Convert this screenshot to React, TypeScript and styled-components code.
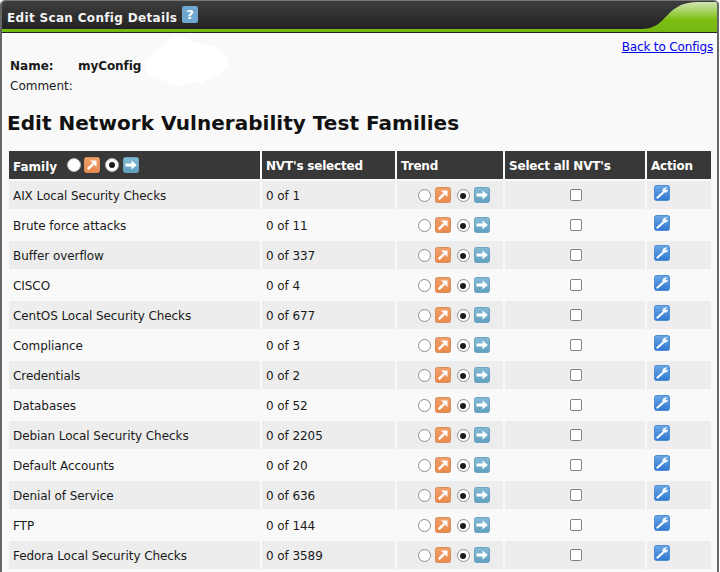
import React from "react";
import styled, { createGlobalStyle } from "styled-components";

const Global = createGlobalStyle`
  html, body { margin: 0; padding: 0; background: #fff; overflow: hidden; height: 572px; }
  body { font-family: "DejaVu Sans", Verdana, sans-serif; font-size: 12px; color: #1a1a1a; letter-spacing: -0.07px; }
`;
const Win = styled.div`
  width: 719px; height: 600px; box-sizing: border-box;
  border-left: 2px solid #666; border-right: 2px solid #666;
  border-top: 1px solid #777; border-radius: 5px 5px 0 0; background: #f9f9f9; overflow: hidden;
`;
const Head = styled.div`
  position: relative; height: 32px; box-sizing: border-box;
  background: linear-gradient(#3e3e3e, #232323 90%);
  border-bottom: 1px solid #222; box-shadow: inset 0 -3px 0 #76b812;
  display: flex; align-items: flex-start; padding: 5px 0 0 5px; gap: 5px; overflow: hidden;
`;
const HeadTitle = styled.span` color: #f4f4f4; font-weight: bold; font-size: 12px; line-height: 24px; letter-spacing: 0.33px; `;
const Swoosh = styled.svg` position: absolute; right: 0; top: 0; `;
const Body = styled.div` position: relative; padding: 0 4px 0 6px; `;
const BackRow = styled.div` display: flex; justify-content: flex-end; height: 23px; padding-top: 6px; box-sizing: border-box; `;
const BackLink = styled.a` color: #0000ee; text-decoration: underline; font-size: 12px; line-height: 17px; letter-spacing: -0.15px; `;
const Blob = styled.svg` position: absolute; left: 138px; top: 0; `;
const InfoRow = styled.div` display: flex; line-height: 20px; padding-left: 2px; `;
const InfoLabel = styled.span<{ $bold?: boolean }>` width: 68px; font-weight: ${p => (p.$bold ? "bold" : "normal")}; letter-spacing: 0; `;
const InfoValue = styled.span` font-weight: bold; `;
const H1 = styled.h1` font-size: 20px; line-height: 24px; font-weight: bold; color: #111; margin: 15px 0 16px -1px; letter-spacing: 0.03px; `;
const Table = styled.table` border-collapse: separate; border-spacing: 2px; table-layout: fixed; width: 704px; margin: -2px 0 0 -1px; `;
const Th = styled.th<{ $w: number }>`
  width: ${p => p.$w}px; height: 28px; box-sizing: border-box; padding: 2px 4px 0; background: #383838; color: #fff;
  text-align: left; font-size: 12px; font-weight: bold; white-space: nowrap; vertical-align: middle; letter-spacing: -0.2px;
`;
const FamilyHead = styled.div` display: flex; align-items: center; margin-top: -2px; `;
const FamilyLabel = styled.span` margin-top: 4px; margin-right: 10px; letter-spacing: 0; `;
const Row = styled.tr<{ $odd: boolean }>` background: ${p => (p.$odd ? "#ededed" : "#f9f9f9")}; `;
const Td = styled.td`
  height: 28px; box-sizing: border-box; padding: 0 4px; white-space: nowrap; font-size: 12px; vertical-align: middle;
`;
const TextCell = styled(Td)` padding-top: 2px; `;
const CheckCell = styled(Td)` text-align: center; padding-left: 5px; `;
const TrendBox = styled.div` display: flex; justify-content: center; align-items: center; height: 18px; padding-left: 7px; `;
const HeadTrend = styled.div` display: flex; align-items: center; height: 18px; `;
const Radio = styled.span<{ $on?: boolean }>`
  width: 13px; height: 13px; box-sizing: border-box; border-radius: 50%; border: 1.5px solid #8d8d88;
  background: #fff; margin-top: 1px; flex: none; display: flex; align-items: center; justify-content: center;
  &::after { content: ""; display: ${p => (p.$on ? "block" : "none")}; width: 6px; height: 6px; border-radius: 50%; background: #1c1c1c; }
`;
const HeadRadio = styled(Radio)` width: 14px; height: 14px; margin-top: 0; border-color: #b5b5b0; `;
const Gap = styled.span<{ $w: number }>` width: ${p => p.$w}px; flex: none; `;
const Check = styled.span`
  display: inline-block; width: 12px; height: 12px; box-sizing: border-box; border: 1.5px solid #85857f;
  border-radius: 2px; background: #fff; vertical-align: middle; margin-top: -1px;
`;
const ActionBox = styled.div` display: flex; margin: -4px 0 0 3px; `;
const IconSvg = styled.svg` flex: none; display: block; `;

const Icon16: React.FC<{ id: string; c1: string; c2: string; edge: string; children: React.ReactNode }> = ({ id, c1, c2, edge, children }) => (
  <IconSvg width="16" height="16" viewBox="0 0 16 16">
    <defs>
      <linearGradient id={id} x1="0" y1="0" x2="0" y2="1">
        <stop offset="0" stopColor={c1} />
        <stop offset="1" stopColor={c2} />
      </linearGradient>
    </defs>
    <rect x="0.5" y="0.5" width="15" height="15" rx="2" fill={`url(#${id})`} stroke={edge} />
    {children}
  </IconSvg>
);
const UpIcon = () => (
  <Icon16 id="gUp" c1="#f0a06a" c2="#e98a4c" edge="#d98b58">
    <path d="M3.8 12.2L9.2 6.8" fill="none" stroke="#fff" strokeWidth="2.6" />
    <path d="M6 3.5H12.5V10Z" fill="#fff" />
  </Icon16>
);
const SameIcon = () => (
  <Icon16 id="gSame" c1="#86bbd6" c2="#5f9fc0" edge="#6ea3bf">
    <path d="M2.5 8H9.5" stroke="#fff" strokeWidth="3" />
    <path d="M8.5 3.5L13.8 8L8.5 12.5Z" fill="#fff" />
  </Icon16>
);
const EditIcon = () => (
  <Icon16 id="gEdit" c1="#6aa8e6" c2="#3079d0" edge="#4d8dd6">
    <path d="M2.8 13.2L9.5 7.2" stroke="#fff" strokeWidth="2" />
    <path d="M13.6 2.6L11.4 4.6L11.9 5.6L14 4.4C14.2 6.6 12.2 8.2 9.6 7.6L8.4 6.2C8.2 3.8 10.8 2 13.6 2.6Z" fill="#fff" />
  </Icon16>
);
const HelpIcon = () => (
  <IconSvg width="16" height="17" viewBox="0 0 16 17">
    <rect x="0" y="0" width="16" height="17" rx="2" fill="#6ea7cf" />
    <text x="8" y="13" textAnchor="middle" fontFamily="DejaVu Sans" fontSize="13" fontWeight="bold" fill="#fff">?</text>
  </IconSvg>
);

const families: [string, number][] = [
  ["AIX Local Security Checks", 1],
  ["Brute force attacks", 11],
  ["Buffer overflow", 337],
  ["CISCO", 4],
  ["CentOS Local Security Checks", 677],
  ["Compliance", 3],
  ["Credentials", 2],
  ["Databases", 52],
  ["Debian Local Security Checks", 2205],
  ["Default Accounts", 20],
  ["Denial of Service", 636],
  ["FTP", 144],
  ["Fedora Local Security Checks", 3589],
];

export default function App() {
  return (
    <>
      <Global />
      <Win>
        <Head>
          <HeadTitle>Edit Scan Config Details</HeadTitle>
          <HelpIcon />
          <Swoosh width="76" height="28" viewBox="0 0 76 28">
            <defs>
              <linearGradient id="sw" x1="0" y1="0" x2="0" y2="1">
                <stop offset="0" stopColor="#d2e5b4" />
                <stop offset="0.65" stopColor="#7dc012" />
                <stop offset="1" stopColor="#76b812" />
              </linearGradient>
            </defs>
            <path d="M0 28C28 28 22 2 56 1H76V28Z" fill="url(#sw)" />
          </Swoosh>
        </Head>
        <Body>
          <Blob width="92" height="56" viewBox="0 0 92 56">
            <path d="M5 32C8 20 22 16 28 7C34 1 46 2 52 10C60 8 84 14 88 28C90 40 72 44 62 50C52 46 46 56 32 52C24 46 4 46 5 32Z" fill="#fff" />
          </Blob>
          <BackRow>
            <BackLink href="#">Back to Configs</BackLink>
          </BackRow>
          <InfoRow>
            <InfoLabel $bold>Name:</InfoLabel>
            <InfoValue>myConfig</InfoValue>
          </InfoRow>
          <InfoRow>
            <InfoLabel>Comment:</InfoLabel>
          </InfoRow>
          <H1>Edit Network Vulnerability Test Families</H1>
          <Table>
            <thead>
              <tr>
                <Th $w={251}>
                  <FamilyHead>
                    <FamilyLabel>Family</FamilyLabel>
                    <HeadTrend>
                      <HeadRadio />
                      <Gap $w={3} />
                      <UpIcon />
                      <Gap $w={5} />
                      <HeadRadio $on />
                      <Gap $w={4} />
                      <SameIcon />
                    </HeadTrend>
                  </FamilyHead>
                </Th>
                <Th $w={133}>NVT's selected</Th>
                <Th $w={106}>Trend</Th>
                <Th $w={140}>Select all NVT's</Th>
                <Th $w={64}>Action</Th>
              </tr>
            </thead>
            <tbody>
              {families.map(([name, n], i) => (
                <Row key={name} $odd={i % 2 === 0}>
                  <TextCell>{name}</TextCell>
                  <TextCell>0 of {n}</TextCell>
                  <Td>
                    <TrendBox>
                      <Radio />
                      <Gap $w={4} />
                      <UpIcon />
                      <Gap $w={6} />
                      <Radio $on />
                      <Gap $w={4} />
                      <SameIcon />
                    </TrendBox>
                  </Td>
                  <CheckCell><Check /></CheckCell>
                  <Td>
                    <ActionBox><EditIcon /></ActionBox>
                  </Td>
                </Row>
              ))}
            </tbody>
          </Table>
        </Body>
      </Win>
    </>
  );
}
